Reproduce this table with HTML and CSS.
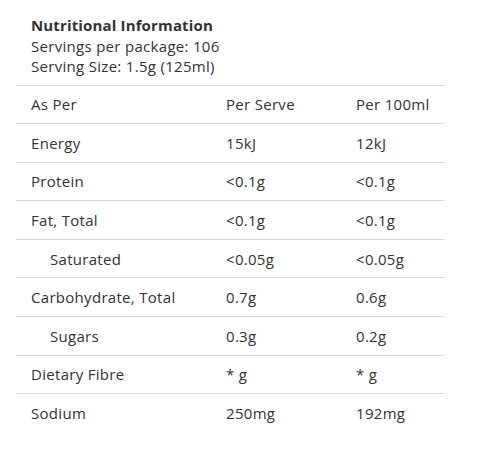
FILE: index.html
```html
<!DOCTYPE html>
<html>
<head>
<meta charset="utf-8">
<link rel="stylesheet" href="styles.css">
</head>
<body>
<div class="panel">
  <div class="intro">
    <div class="title">Nutritional Information</div>
    <div class="line">Servings per package: 106</div>
    <div class="line">Serving Size: 1.5g (125ml)</div>
  </div>
  <table class="nutri">
    <tr><td>As Per</td><td>Per Serve</td><td>Per 100ml</td></tr>
    <tr><td>Energy</td><td>15kJ</td><td>12kJ</td></tr>
    <tr><td>Protein</td><td>&lt;0.1g</td><td>&lt;0.1g</td></tr>
    <tr><td>Fat, Total</td><td>&lt;0.1g</td><td>&lt;0.1g</td></tr>
    <tr><td class="sub">Saturated</td><td>&lt;0.05g</td><td>&lt;0.05g</td></tr>
    <tr><td>Carbohydrate, Total</td><td>0.7g</td><td>0.6g</td></tr>
    <tr><td class="sub">Sugars</td><td>0.3g</td><td>0.2g</td></tr>
    <tr><td>Dietary Fibre</td><td>* g</td><td>* g</td></tr>
    <tr class="last"><td>Sodium</td><td>250mg</td><td>192mg</td></tr>
  </table>
</div>
</body>
</html>
```
FILE: styles.css
```css
html, body {
  margin: 0;
  padding: 0;
  background: #fff;
}
body {
  font-family: "Open Sans", "DejaVu Sans", sans-serif;
  color: #333;
  font-size: 15px;
  letter-spacing: 0.3px;
}
.panel {
  padding: 15px 16px;
  width: 429px;
}
.intro {
  padding-left: 15px;
  margin-bottom: 8px;
}
.title {
  font-weight: 700;
  font-size: 15px;
  line-height: 20.5px;
  letter-spacing: 0.15px;
}
.line {
  line-height: 20.5px;
}
.nutri {
  width: 429px;
  border-collapse: collapse;
  border-top: 1px solid #ddd;
}
.nutri td {
  height: 37.6px;
  padding: 0 0 0 15px;
  border-bottom: 1px solid #ddd;
  vertical-align: middle;
  line-height: 20px;
}
.nutri td:nth-child(1) { width: 180px; }
.nutri td:nth-child(2) { width: 115px; }
.nutri td.sub { padding-left: 34px; width: 161px; }
.nutri tr.last td { border-bottom: none; }
```
